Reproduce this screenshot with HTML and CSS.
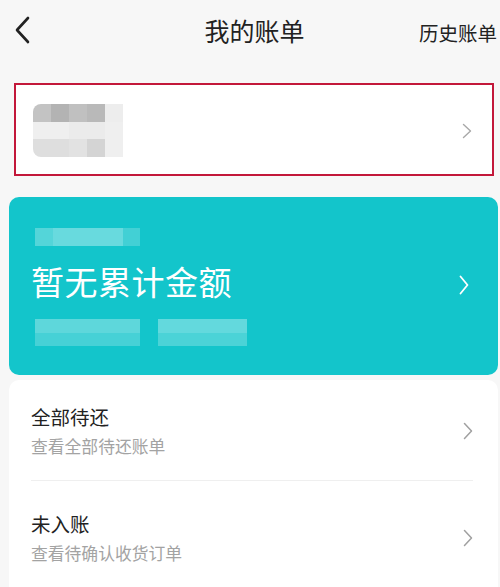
FILE: index.html
```html
<!DOCTYPE html>
<html lang="zh-CN">
<head>
<meta charset="utf-8">
<title>我的账单</title>
<link rel="stylesheet" href="styles.css">
</head>
<body>
<div class="page">
  <header class="topbar">
    <svg class="back" width="16" height="28" viewBox="0 0 16 28"><path d="M14 2 L3 14 L14 26" fill="none" stroke="#222" stroke-width="2.6" stroke-linecap="round" stroke-linejoin="round"/></svg>
    <div class="title">我的账单</div>
    <div class="history">历史账单</div>
  </header>

  <section class="account">
    <div class="mosaic">
      <span class="m c1"></span><span class="m c2"></span><span class="m c3"></span><span class="m c2b"></span><span class="m c5"></span>
      <span class="m c6"></span><span class="m c6"></span><span class="m c7"></span><span class="m c7"></span><span class="m c6"></span>
      <span class="m c8"></span><span class="m c8"></span><span class="m c9"></span><span class="m c10"></span><span class="m c6"></span>
    </div>
    <svg class="chev" width="10" height="16" viewBox="0 0 10 16"><path d="M1.5 1.5 L8.5 8 L1.5 14.5" fill="none" stroke="#a8a8a8" stroke-width="1.4" stroke-linecap="round" stroke-linejoin="round"/></svg>
  </section>

  <section class="total">
    <div class="total-main">
      <div class="tbar tbar-top"><span></span><span></span><span></span></div>
      <div class="total-text">暂无累计金额</div>
      <div class="tbars">
        <div class="tbar tbar-a"><span></span><span></span></div>
        <div class="tbar tbar-b"><span></span><span></span></div>
      </div>
    </div>
    <svg class="chev-w" width="12" height="22" viewBox="0 0 12 22"><path d="M2.5 2.5 L9.5 11 L2.5 19.5" fill="none" stroke="#ffffff" stroke-width="1.8" stroke-linecap="round" stroke-linejoin="round"/></svg>
  </section>

  <section class="list">
    <div class="item item-first">
      <div class="item-text">
        <div class="item-title">全部待还</div>
        <div class="item-sub">查看全部待还账单</div>
      </div>
      <svg class="chev" width="10" height="18" viewBox="0 0 10 18"><path d="M1.5 1.5 L8.5 9 L1.5 16.5" fill="none" stroke="#a0a0a0" stroke-width="1.5" stroke-linecap="round" stroke-linejoin="round"/></svg>
    </div>
    <div class="divider"></div>
    <div class="item item-second">
      <div class="item-text">
        <div class="item-title">未入账</div>
        <div class="item-sub">查看待确认收货订单</div>
      </div>
      <svg class="chev" width="10" height="18" viewBox="0 0 10 18"><path d="M1.5 1.5 L8.5 9 L1.5 16.5" fill="none" stroke="#a0a0a0" stroke-width="1.5" stroke-linecap="round" stroke-linejoin="round"/></svg>
    </div>
  </section>
</div>
</body>
</html>
```

FILE: styles.css
```css
* { box-sizing: border-box; }
html, body {
  margin: 0;
  padding: 0;
  background: #f7f7f7;
  font-family: "Noto Sans CJK SC", "Noto Sans", sans-serif;
  color: #222;
}
.page {
  width: 500px;
  height: 587px;
  overflow: hidden;
}
.topbar {
  height: 60px;
  display: flex;
  align-items: center;
  padding: 0 3px 0 14px;
}
.back {
  flex: none;
}
.title {
  flex: 1;
  text-align: center;
  font-size: 25px;
  line-height: 30px;
  padding-left: 60px;
  color: #222;
}
.history {
  flex: none;
  font-size: 19.5px;
  line-height: 26px;
  margin-top: 6px;
  color: #222;
}

.account {
  margin: 23px 6px 0 14px;
  height: 93px;
  border: 2px solid #c3183a;
  background: #fff;
  display: flex;
  align-items: center;
  justify-content: space-between;
  padding: 2px 20px 0 17px;
}
.mosaic {
  display: grid;
  grid-template-columns: repeat(5, 18px);
  grid-template-rows: repeat(3, 17.7px);
  border-radius: 8px 0 0 8px;
  overflow: hidden;
}
.m { display: block; }
.c1 { background: #c3c3c3; }
.c2 { background: #b3b3b3; }
.c2b { background: #b9b9b9; }
.c3 { background: #c0c0c0; }
.c5 { background: #ededed; }
.c6 { background: #efefef; }
.c7 { background: #ebebeb; }
.c8 { background: #dedede; }
.c9 { background: #e2e2e2; }
.c10 { background: #d4d4d4; }

.total {
  margin: 21px 2px 0 9px;
  height: 178px;
  background: #13c5cb;
  border-radius: 10px;
  display: flex;
  align-items: center;
  justify-content: space-between;
  padding: 0 28px 0 26px;
}
.total-main {
  display: flex;
  flex-direction: column;
  padding-top: 2px;
}
.tbar {
  display: flex;
}
.tbar span {
  display: block;
  height: 100%;
}
.tbar-top {
  width: 105px;
  height: 18px;
}
.tbar-top span:nth-child(1) { width: 18px; background: rgba(255,255,255,0.28); }
.tbar-top span:nth-child(2) { width: 70px; background: rgba(255,255,255,0.36); }
.tbar-top span:nth-child(3) { width: 17px; background: rgba(255,255,255,0.2); }
.total-text {
  font-size: 33px;
  line-height: 40px;
  color: #fff;
  margin-top: 15px;
  margin-left: -4px;
  letter-spacing: 0.5px;
}
.tbars {
  display: flex;
  gap: 18px;
  margin-top: 18px;
}
.tbar-a, .tbar-b {
  height: 27px;
  flex-direction: column;
}
.tbar-a { width: 105px; }
.tbar-b { width: 89px; }
.tbar-a span, .tbar-b span { width: 100%; }
.tbar-a span:nth-child(1) { height: 14px; background: rgba(255,255,255,0.32); }
.tbar-a span:nth-child(2) { height: 13px; background: rgba(255,255,255,0.22); }
.tbar-b span:nth-child(1) { height: 14px; background: rgba(255,255,255,0.34); }
.tbar-b span:nth-child(2) { height: 13px; background: rgba(255,255,255,0.24); }
.chev-w { flex: none; margin-top: -2px; }

.list {
  margin: 5px 2px 0 9px;
  min-height: 230px;
  background: #fff;
  border-radius: 10px;
}
.item {
  display: flex;
  align-items: center;
  justify-content: space-between;
  padding: 0 25px 0 22px;
}
.item-first { padding-top: 23px; padding-bottom: 22px; }
.item-second { padding-top: 29px; padding-bottom: 22px; }
.item-title {
  font-size: 19.5px;
  line-height: 28px;
  color: #222;
}
.item-sub {
  font-size: 16.8px;
  line-height: 24px;
  color: #a3a3a3;
  margin-top: 3px;
}
.divider {
  height: 1px;
  background: #efefef;
  margin: 0 25px 0 22px;
}
.chev { flex: none; }
```
